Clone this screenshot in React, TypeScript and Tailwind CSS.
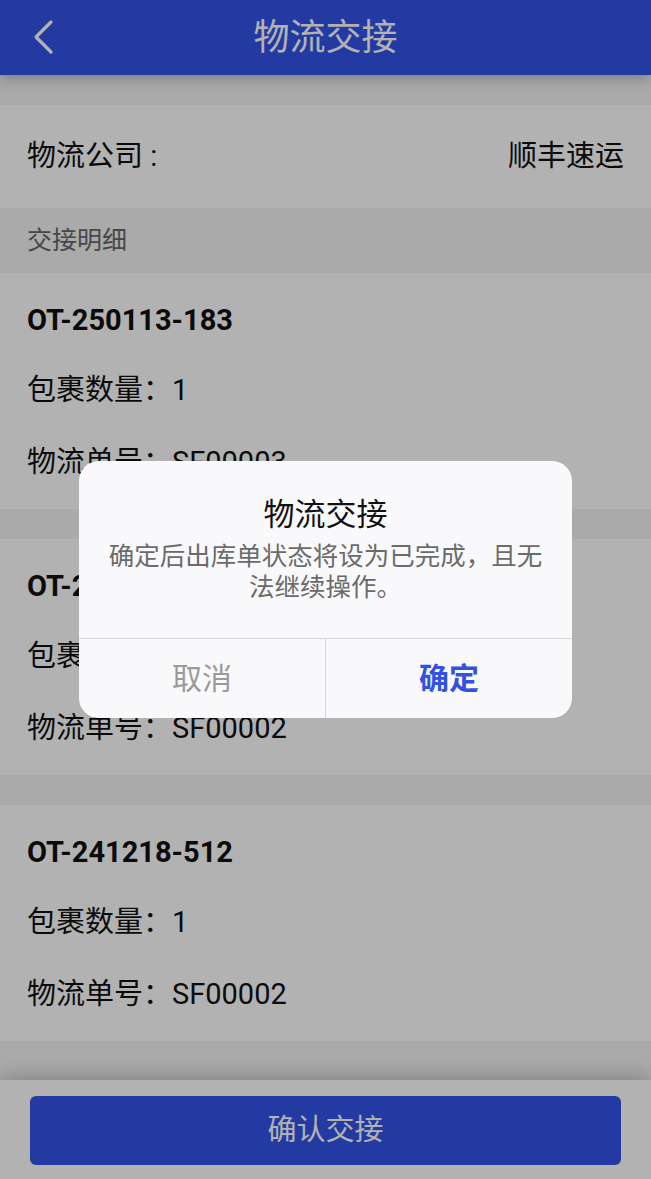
import React from 'react'

interface Handover {
  orderNo: string
  packages: number
  trackingNo: string
}

const items: Handover[] = [
  { orderNo: 'OT-250113-183', packages: 1, trackingNo: 'SF00003' },
  { orderNo: 'OT-250109-066', packages: 1, trackingNo: 'SF00002' },
  { orderNo: 'OT-241218-512', packages: 1, trackingNo: 'SF00002' },
]

function BackIcon() {
  return (
    <svg width="22" height="36" viewBox="0 0 22 36" fill="none">
      <path d="M18 3 L3 18 L18 33" stroke="white" strokeWidth="3.2" strokeLinecap="round" strokeLinejoin="round" />
    </svg>
  )
}

export default function App() {
  return (
    <div className="relative h-[1179px] w-full overflow-hidden bg-[#f4f4f4] font-['Roboto','Noto_Sans_CJK_SC',sans-serif] text-[#111]">
      <div className="flex h-full flex-col">
        {/* header */}
        <div className="relative z-10 flex h-[75px] shrink-0 items-center justify-center bg-[#3153e9] shadow-[0_3px_14px_rgba(0,0,0,0.28)]">
          <button className="absolute left-[33px] top-[19px]">
            <BackIcon />
          </button>
          <h1 className="text-[36px] leading-none text-white">物流交接</h1>
        </div>

        <div className="flex-1 overflow-hidden pt-[30px]">
          <div className="flex h-[103px] items-center justify-between bg-white px-[27px] text-[29px] leading-none">
            <span>物流公司 :</span>
            <span>顺丰速运</span>
          </div>
          <div className="flex h-[65px] items-center px-[27px] text-[25px] leading-none text-[#666]">交接明细</div>

          <div className="flex flex-col gap-[30px]">
            {items.map((item) => (
              <div key={item.orderNo} className="bg-white px-[27px] pb-[11px] pt-[13px] text-[29px] leading-none">
                <div className="flex h-[69px] items-center font-bold">{item.orderNo}</div>
                <div className="flex h-[71px] items-center">包裹数量：{item.packages}</div>
                <div className="flex h-[72px] items-center">物流单号：{item.trackingNo}</div>
              </div>
            ))}
          </div>
        </div>

        {/* footer */}
        <div className="relative z-10 h-[99px] shrink-0 bg-white px-[30px] pt-[16px] shadow-[0_-4px_18px_rgba(0,0,0,0.22)]">
          <button className="flex h-[69px] w-full items-center justify-center rounded-[6px] bg-[#3153e9] text-[29px] leading-none text-white">
            确认交接
          </button>
        </div>
      </div>

      {/* mask + dialog */}
      <div className="absolute inset-0 z-20 flex items-center justify-center bg-black/30">
        <div className="w-[493px] overflow-hidden rounded-[20px] bg-[#f9f9fb]">
          <div className="flex flex-col items-center px-[28px] pb-[35px] pt-[35px] text-center">
            <div className="text-[31px] leading-[38px] text-[#111]">物流交接</div>
            <div className="mt-[7px] text-[25.5px] leading-[31px] text-[#6b6b6b]">
              确定后出库单状态将设为已完成，且无法继续操作。
            </div>
          </div>
          <div className="flex h-[80px] border-t border-[#d6d6d6]">
            <button className="flex flex-1 items-center justify-center border-r border-[#d6d6d6] text-[30px] text-[#9a9a9a]">
              取消
            </button>
            <button className="flex flex-1 items-center justify-center text-[30px] font-bold text-[#3153e0]">
              确定
            </button>
          </div>
        </div>
      </div>
    </div>
  )
}
